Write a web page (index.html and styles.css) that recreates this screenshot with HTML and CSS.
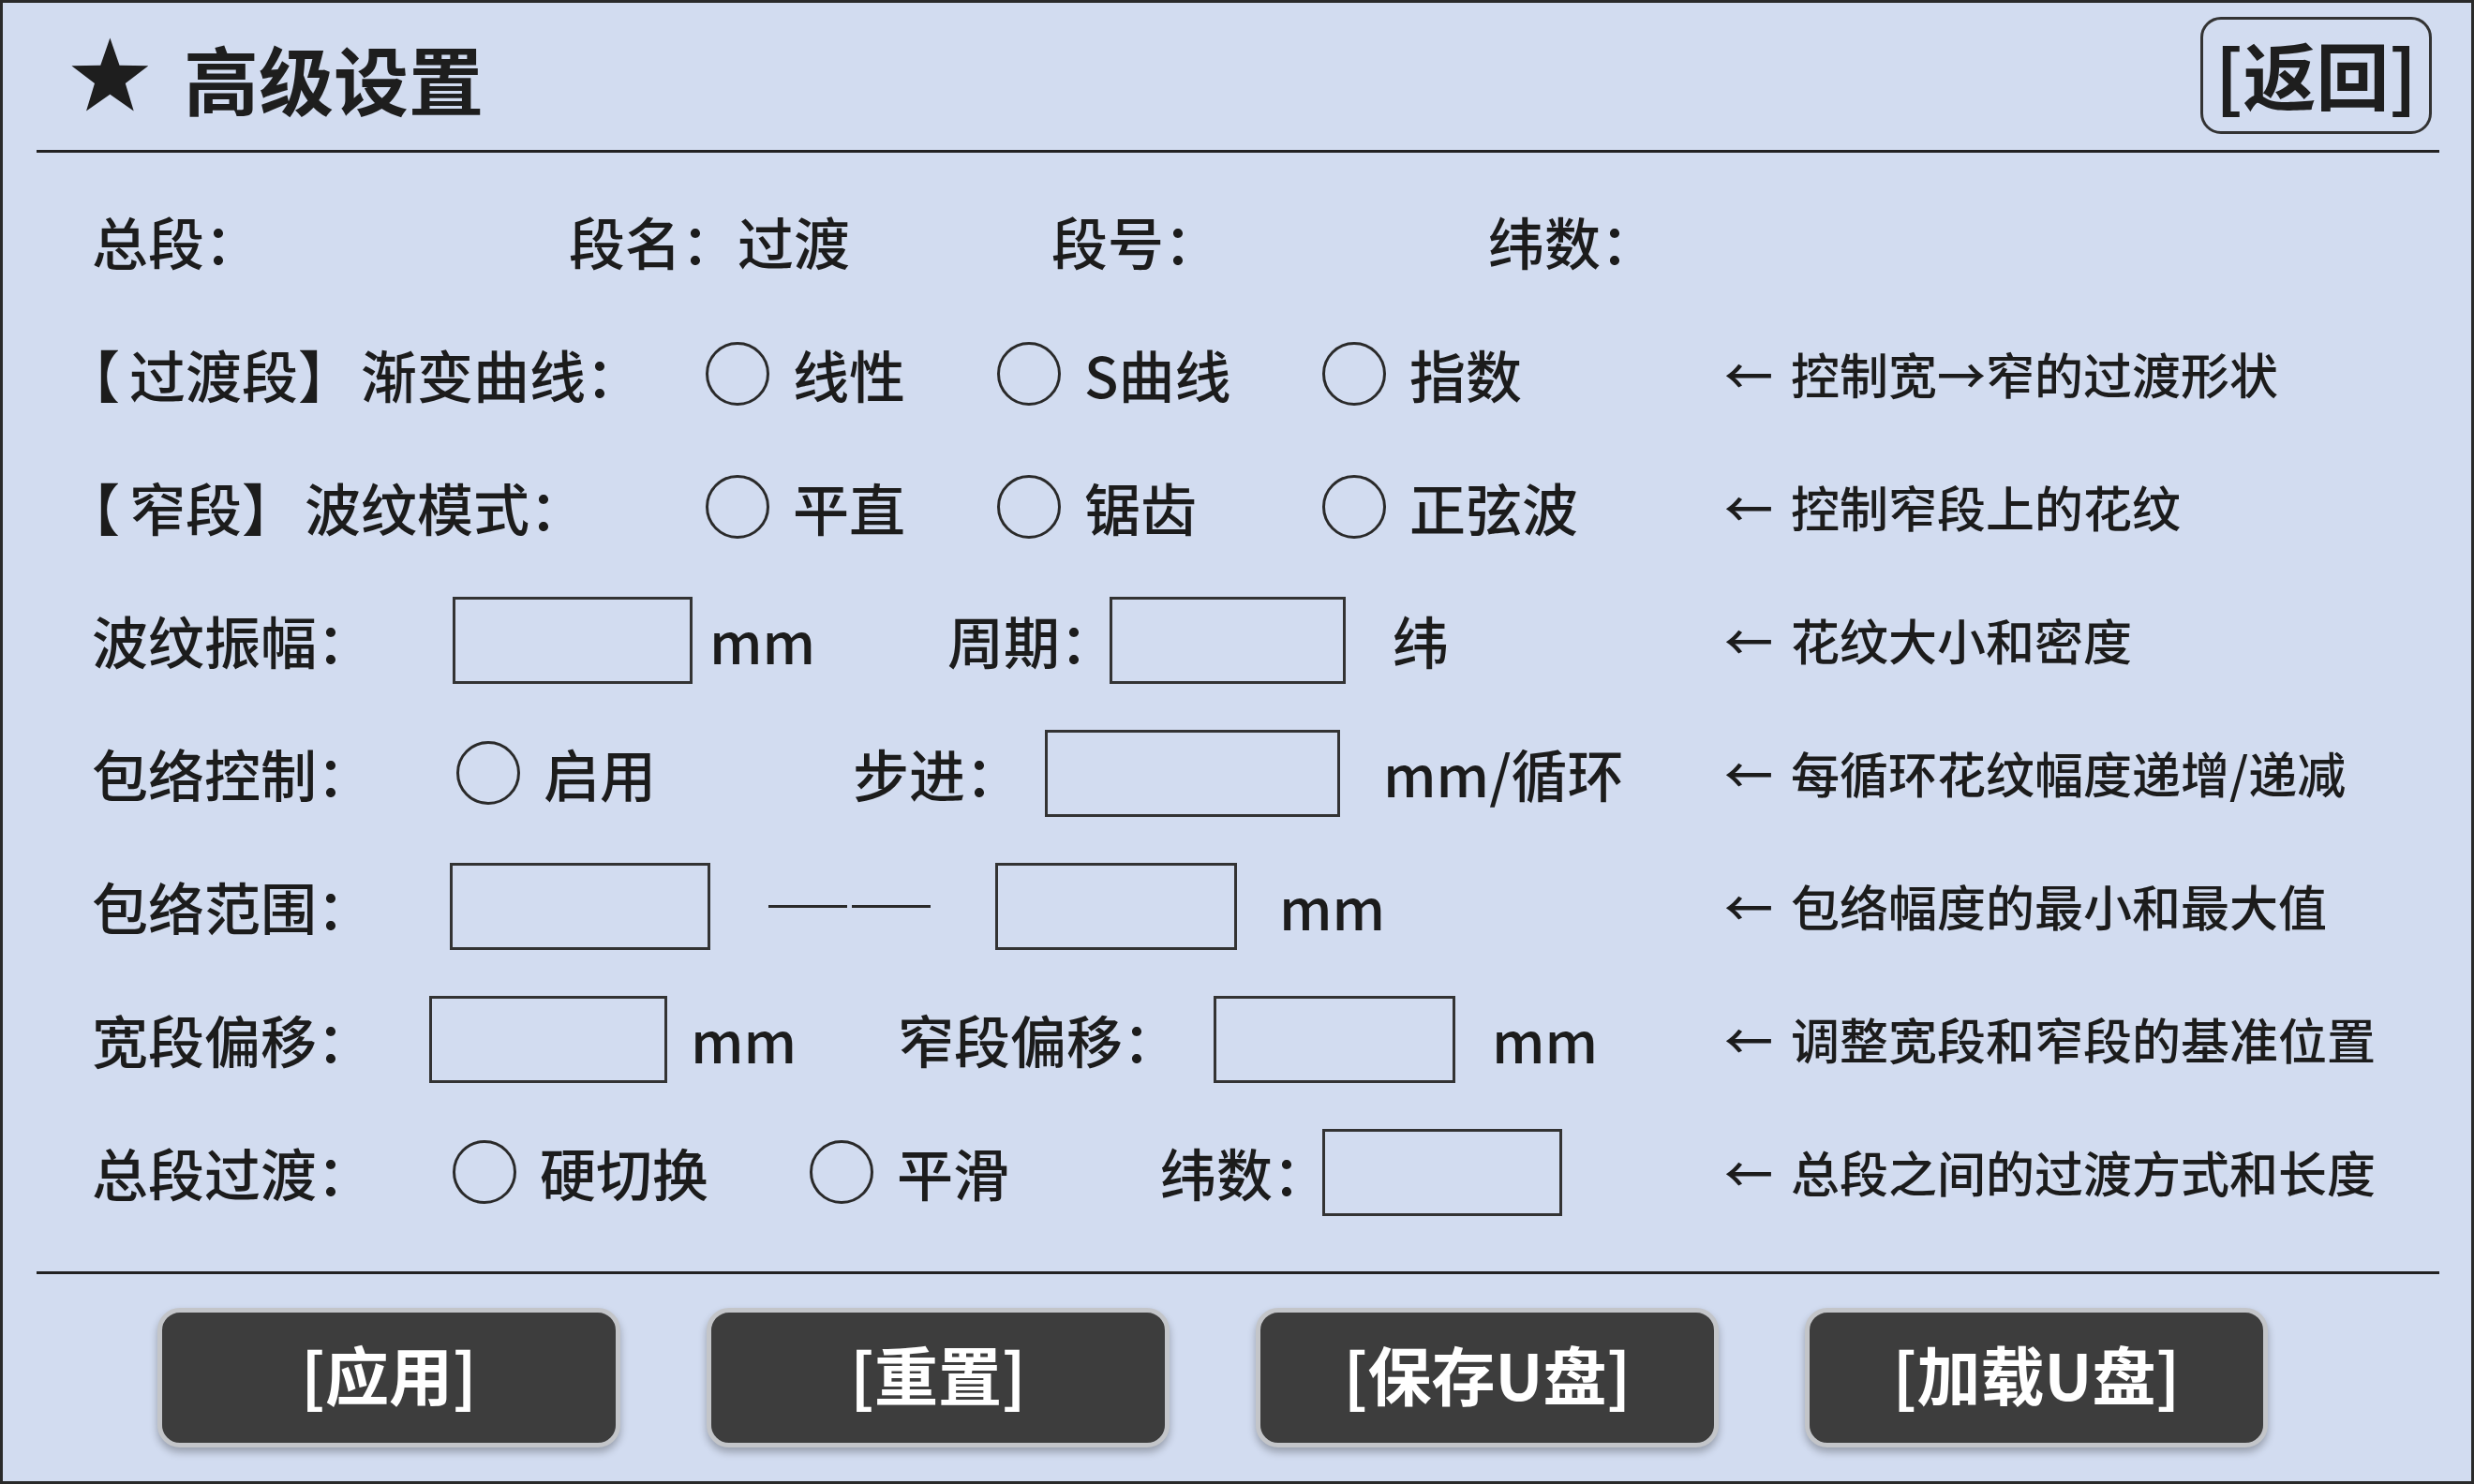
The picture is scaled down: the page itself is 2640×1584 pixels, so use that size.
FILE: index.html
```html
<!DOCTYPE html>
<html lang="zh-CN">
<head>
<meta charset="utf-8">
<title>高级设置</title>
<link rel="stylesheet" href="styles.css">
</head>
<body>
<div class="frame">
  <header class="header">
    <svg class="star" viewBox="2 3 95.1 90.5" aria-hidden="true">
      <polygon points="50,3 61.76,36.82 97.55,37.55 69.02,59.18 79.39,93.45 50,73 20.61,93.45 30.98,59.18 2.45,37.55 38.24,36.82"/>
    </svg>
    <h1 class="title">高级设置</h1>
    <div class="back">[返回]</div>
  </header>
  <div class="rule"></div>

  <main class="rows">
    <div class="row r-info">
      <span>总段：</span>
      <span>段名：过渡</span>
      <span>段号：</span>
      <span>纬数：</span>
    </div>

    <div class="row r-opt">
      <span class="bracket"><span class="lb">【</span>过渡段<span class="rb">】</span>渐变曲线：</span>
      <span class="opt"><i class="radio"></i>线性</span>
      <span class="opt"><i class="radio"></i>S曲线</span>
      <span class="opt"><i class="radio"></i>指数</span>
      <span class="hint"><span class="arrow">←</span>控制宽→窄的过渡形状</span>
    </div>

    <div class="row r-opt">
      <span class="bracket"><span class="lb">【</span>窄段<span class="rb">】</span>波纹模式：</span>
      <span class="opt"><i class="radio"></i>平直</span>
      <span class="opt"><i class="radio"></i>锯齿</span>
      <span class="opt"><i class="radio"></i>正弦波</span>
      <span class="hint"><span class="arrow">←</span>控制窄段上的花纹</span>
    </div>

    <div class="row r-amp">
      <span>波纹振幅：</span>
      <span class="field w256"></span>
      <span>mm</span>
      <span>周期：</span>
      <span class="field w252"></span>
      <span>纬</span>
      <span class="hint"><span class="arrow">←</span>花纹大小和密度</span>
    </div>

    <div class="row r-env">
      <span>包络控制：</span>
      <span class="opt"><i class="radio"></i>启用</span>
      <span>步进：</span>
      <span class="field w315"></span>
      <span>mm/循环</span>
      <span class="hint"><span class="arrow">←</span>每循环花纹幅度递增/递减</span>
    </div>

    <div class="row r-range">
      <span>包络范围：</span>
      <span class="field w278"></span>
      <span class="dash"><b></b><b></b></span>
      <span class="field w258"></span>
      <span>mm</span>
      <span class="hint"><span class="arrow">←</span>包络幅度的最小和最大值</span>
    </div>

    <div class="row r-offset">
      <span>宽段偏移：</span>
      <span class="field w254"></span>
      <span>mm</span>
      <span>窄段偏移：</span>
      <span class="field w258"></span>
      <span>mm</span>
      <span class="hint"><span class="arrow">←</span>调整宽段和窄段的基准位置</span>
    </div>

    <div class="row r-seg">
      <span>总段过渡：</span>
      <span class="opt"><i class="radio"></i>硬切换</span>
      <span class="opt"><i class="radio"></i>平滑</span>
      <span>纬数：</span>
      <span class="field w256"></span>
      <span class="hint"><span class="arrow">←</span>总段之间的过渡方式和长度</span>
    </div>
  </main>

  <div class="rule rule-bottom"></div>

  <footer class="actions">
    <div class="btn">[应用]</div>
    <div class="btn">[重置]</div>
    <div class="btn">[保存U盘]</div>
    <div class="btn">[加载U盘]</div>
  </footer>
</div>
</body>
</html>
```

FILE: styles.css
```css
* { box-sizing: border-box; }

html, body {
  margin: 0;
  padding: 0;
  background: #d2dcf0;
}

body {
  font-family: "Noto Sans CJK SC", "Noto Sans", sans-serif;
  color: #1c1c1c;
}

.frame {
  width: 2640px;
  height: 1584px;
  border: 3px solid #2a2a2a;
  background: #d2dcf0;
  display: flex;
  flex-direction: column;
  overflow: hidden;
}

/* header */
.header {
  height: 157px;
  display: flex;
  align-items: center;
  padding: 0 42px 0 73px;
}

.star {
  width: 82px;
  height: 79px;
  fill: #1e1e1e;
  flex: none;
  margin-bottom: 4px;
}

.title {
  margin: 0 0 0 38px;
  font-size: 80px;
  font-weight: 700;
  line-height: 1;
  color: #1e1e1e;
}

.back {
  margin-left: auto;
  width: 247px;
  height: 125px;
  margin-top: -2px;
  border: 3px solid #333;
  border-radius: 22px;
  display: flex;
  align-items: center;
  justify-content: center;
  font-size: 78px;
  font-weight: 700;
  line-height: 1;
  color: #1e1e1e;
  padding-bottom: 6px;
}

.rule {
  height: 3px;
  background: #222;
  margin: 0 34px 0 36px;
  flex: none;
}

/* rows */
.rows {
  padding-top: 23px;
}

.row {
  height: 142px;
  padding-left: 95px;
  display: grid;
  align-items: center;
  font-size: 60px;
  font-weight: 500;
  line-height: 1.2;
  white-space: nowrap;
}

.r-info   { grid-template-columns: 509px 515px 466px 1fr; }
.r-opt    { grid-template-columns: 655px 311px 347px 429px 1fr; }
.r-amp    { grid-template-columns: 385px 274px 254px 173px 302px 354px 1fr; }
.r-env    { grid-template-columns: 389px 423px 205px 361px 364px 1fr; }
.r-range  { grid-template-columns: 382px 340px 242px 303px 475px 1fr; }
.r-offset { grid-template-columns: 360px 279px 221px 337px 297px 248px 1fr; }
.r-seg    { grid-template-columns: 385px 381px 374px 173px 429px 1fr; }

.bracket {
  margin-left: -30px;
}

.lb { margin-right: 10px; }
.rb { margin-right: 7px; }

.opt {
  display: flex;
  align-items: center;
  gap: 25px;
}

.radio {
  display: block;
  width: 68px;
  height: 68px;
  border: 3px solid #2a2a2a;
  border-radius: 50%;
  flex: none;
}

.field {
  display: block;
  height: 93px;
  border: 3px solid #333;
}

.w252 { width: 252px; }
.w254 { width: 254px; }
.w256 { width: 256px; }
.w258 { width: 258px; }
.w278 { width: 278px; }
.w315 { width: 315px; }

.dash {
  display: flex;
  gap: 5px;
  align-items: center;
}

.dash b {
  display: block;
  width: 84px;
  height: 3px;
  background: #2a2a2a;
}

.hint {
  font-size: 52px;
  font-weight: 500;
}

.arrow {
  margin-right: 19px;
}

.rule-bottom {
  margin-top: 35px;
}

/* buttons */
.actions {
  display: flex;
  gap: 92px;
  padding-left: 165px;
  margin-top: 36px;
}

.btn {
  width: 494px;
  height: 149px;
  background: #3d3d3d;
  border: 5px solid #c3c5c9;
  border-radius: 24px;
  box-shadow: 0 5px 8px rgba(0, 0, 0, 0.28);
  display: flex;
  align-items: center;
  justify-content: center;
  color: #ffffff;
  font-size: 68px;
  font-weight: 700;
  line-height: 1;
  padding-bottom: 10px;
}
```
